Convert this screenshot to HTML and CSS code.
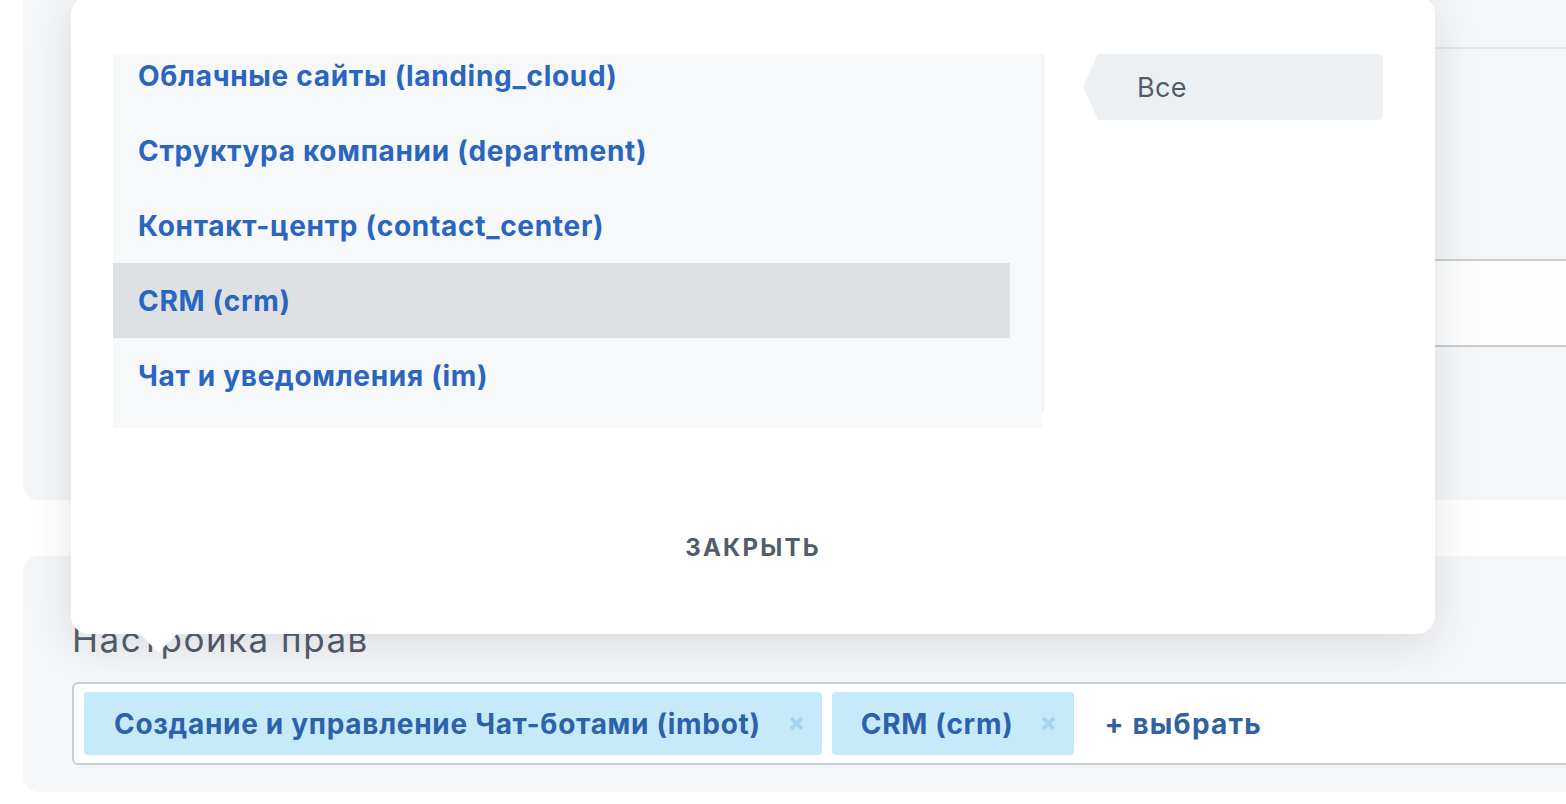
FILE: index.html
```html
<!DOCTYPE html>
<html lang="ru">
<head>
<meta charset="utf-8">
<title>Настройка прав</title>
<link rel="stylesheet" href="styles.css">
</head>
<body>
<div class="page">
  <section class="card card-top">
    <div class="field-line"></div>
    <div class="input input-top"></div>
  </section>
  <section class="card card-rights">
    <div class="label">Настройка прав</div>
    <div class="input tags">
      <span class="tag"><span class="tag-text">Создание и управление Чат-ботами (imbot)</span><svg class="tag-x" viewBox="0 0 14 14"><path d="M2 2L12 12M12 2L2 12"/></svg></span>
      <span class="tag tag-short"><span class="tag-text">CRM (crm)</span><svg class="tag-x" viewBox="0 0 14 14"><path d="M2 2L12 12M12 2L2 12"/></svg></span>
      <span class="add">+ выбрать</span>
    </div>
  </section>
</div>

<div class="popup">
  <div class="popup-body">
    <div class="picker">
      <div class="scroll">
        <div class="list">
          <div class="row">Облачные сайты (landing_cloud)</div>
          <div class="row">Структура компании (department)</div>
          <div class="row">Контакт-центр (contact_center)</div>
          <div class="row row-active">CRM (crm)</div>
          <div class="row">Чат и уведомления (im)</div>
        </div>
      </div>
      <div class="picker-foot"></div>
    </div>
    <div class="tabs">
      <div class="tab"><span class="tab-text">Все</span></div>
    </div>
  </div>
  <div class="popup-foot">
    <span class="close-btn">ЗАКРЫТЬ</span>
  </div>
</div>
</body>
</html>
```

FILE: styles.css
```css
html, body {
  margin: 0;
  padding: 0;
}
body {
  width: 1566px;
  height: 804px;
  overflow: hidden;
  background: #ffffff;
  font-family: Inter, "Liberation Sans", "Noto Sans", sans-serif;
  position: relative;
}
.page {
  display: flex;
  flex-direction: column;
  padding-left: 23px;
}
.card {
  background: #f5f6f8;
  border-radius: 16px;
  margin-right: -40px;
  box-sizing: border-box;
  padding-left: 49px;
}
.card-top {
  margin-top: -20px;
  height: 520px;
  padding-top: 67px;
}
.field-line {
  height: 2px;
  background: #e4e7ea;
}
.input {
  box-sizing: border-box;
  border: 2px solid #c6cdd3;
  border-radius: 6px;
  background: #fdfdfd;
}
.input-top {
  margin-top: 210px;
  height: 88px;
}
.card-rights {
  margin-top: 56px;
  height: 236px;
  padding-top: 63px;
}
.label {
  font-size: 35px;
  line-height: 40px;
  letter-spacing: 1.5px;
  color: #535c69;
  font-weight: 400;
}
.tags {
  margin-top: 23px;
  height: 83px;
  background: #ffffff;
  display: flex;
  align-items: center;
  padding: 0 10px;
  gap: 10px;
}
.tag {
  height: 63px;
  background: #c6eaf9;
  border-radius: 4px;
  display: flex;
  align-items: center;
  padding: 0 18px 0 30px;
  gap: 28px;
}
.tag-short {
  padding-left: 29px;
}
.tag-text {
  font-size: 28px;
  font-weight: 700;
  letter-spacing: 0.7px;
  color: #2c62ab;
}
.tag-x {
  width: 15px;
  height: 15px;
  fill: none;
  stroke: #a6d3ed;
  stroke-width: 3.4;
}
.add {
  margin-left: 20px;
  font-size: 28px;
  font-weight: 700;
  letter-spacing: 1.2px;
  color: #30629f;
}

.popup {
  position: absolute;
  left: 71px;
  top: -4px;
  width: 1364px;
  height: 638px;
  background: #ffffff;
  border-radius: 18px;
  box-shadow: 0 10px 44px rgba(40, 48, 60, 0.13);
  display: flex;
  flex-direction: column;
}
.popup::after {
  content: "";
  position: absolute;
  left: 74px;
  bottom: -13px;
  width: 27px;
  height: 27px;
  background: #ffffff;
  transform: rotate(45deg);
}
.popup-body {
  display: flex;
  padding: 58px 52px 0 42px;
}
.picker {
  width: 931px;
  display: flex;
  flex-direction: column;
}
.scroll {
  height: 358px;
  overflow: hidden;
  background: #f7f8fa;
  border-right: 2px solid #eef0f2;
}
.list {
  margin-top: -16px;
}
.row {
  width: 897px;
  height: 75px;
  box-sizing: border-box;
  padding-left: 25px;
  display: flex;
  align-items: center;
  font-size: 28px;
  font-weight: 700;
  letter-spacing: 0.7px;
  color: #2a65bf;
  white-space: nowrap;
}
.row-active {
  background: #dee1e4;
}
.picker-foot {
  width: 929px;
  height: 16px;
  background: #f7f8fa;
}
.tabs {
  margin-left: 39px;
}
.tab {
  position: relative;
  width: 286px;
  height: 66px;
  margin-left: 14px;
  background: #edf0f3;
  border-radius: 0 5px 5px 0;
  display: flex;
  align-items: center;
  box-sizing: border-box;
  padding-left: 40px;
}
.tab::before {
  content: "";
  position: absolute;
  left: -14px;
  top: 0;
  width: 15px;
  height: 66px;
  background: #edf0f3;
  clip-path: polygon(100% 0, 100% 100%, 0 50%);
}
.tab-text {
  font-size: 27px;
  letter-spacing: 0.3px;
  color: #535c69;
}
.popup-foot {
  margin-top: auto;
  height: 174px;
  display: flex;
  align-items: center;
  justify-content: center;
}
.close-btn {
  font-size: 24px;
  font-weight: 700;
  letter-spacing: 2.2px;
  color: #535c69;
}
```
